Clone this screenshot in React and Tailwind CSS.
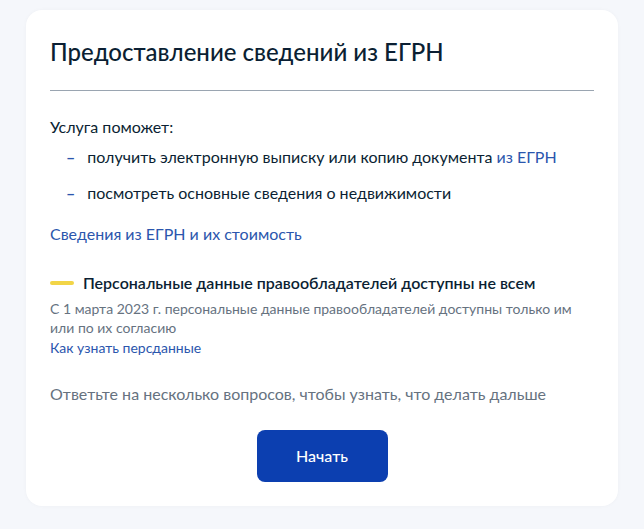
import React from 'react';

const App = () => {
  return (
    <div className="min-h-[529px] bg-[#f5f7fb] px-[26px] pt-[10px] pb-[22px] font-['Lato','Noto_Sans',sans-serif] text-[#0b1f33]">
      <div className="rounded-2xl bg-white px-6 pt-[26px] pb-6 shadow-[0_0_4px_rgba(0,0,0,0.03)]">
        {/* Title */}
        <h1 className="text-[24px] leading-[32px] font-medium">
          Предоставление сведений из ЕГРН
        </h1>
        <div className="mt-[22px] h-px bg-[#9aa5b1]"></div>

        {/* Description */}
        <p className="mt-[24px] text-[16px] leading-[24px]">Услуга поможет:</p>
        <ul className="mt-[6px] space-y-[12px] pl-4 text-[16px] leading-[24px]">
          <li className="flex gap-[12px]">
            <span className="text-[#2b56ad] font-bold">–</span>
            <span>
              получить электронную выписку или копию документа{' '}
              <a className="text-[#2b56ad]">из ЕГРН</a>
            </span>
          </li>
          <li className="flex gap-[12px]">
            <span className="text-[#2b56ad] font-bold">–</span>
            <span>посмотреть основные сведения о недвижимости</span>
          </li>
        </ul>
        <a className="mt-[17px] block text-[16px] leading-[24px] text-[#2b56ad]">
          Сведения из ЕГРН и их стоимость
        </a>

        {/* Notice */}
        <div className="mt-[25px] flex items-center gap-[9px]">
          <span className="h-[4px] w-[24px] rounded-full bg-[#f2d547]"></span>
          <span className="text-[16px] leading-[24px] font-semibold">
            Персональные данные правообладателей доступны не всем
          </span>
        </div>
        <p className="mt-[4px] text-[14px] leading-[19px] text-[#66727f]">
          С 1 марта 2023 г. персональные данные правообладателей доступны только им
          <br />
          или по их согласию
        </p>
        <a className="mt-[1px] block text-[14px] leading-[20px] text-[#2b56ad]">
          Как узнать персданные
        </a>

        <p className="mt-[24px] text-[16px] leading-[24px] text-[#66727f]">
          Ответьте на несколько вопросов, чтобы узнать, что делать дальше
        </p>

        <div className="mt-[24px] flex justify-center">
          <button className="h-[52px] w-[131px] rounded-lg bg-[#0c3fb0] text-[16px] font-medium text-white">
            Начать
          </button>
        </div>
      </div>
    </div>
  );
};

export default App;
